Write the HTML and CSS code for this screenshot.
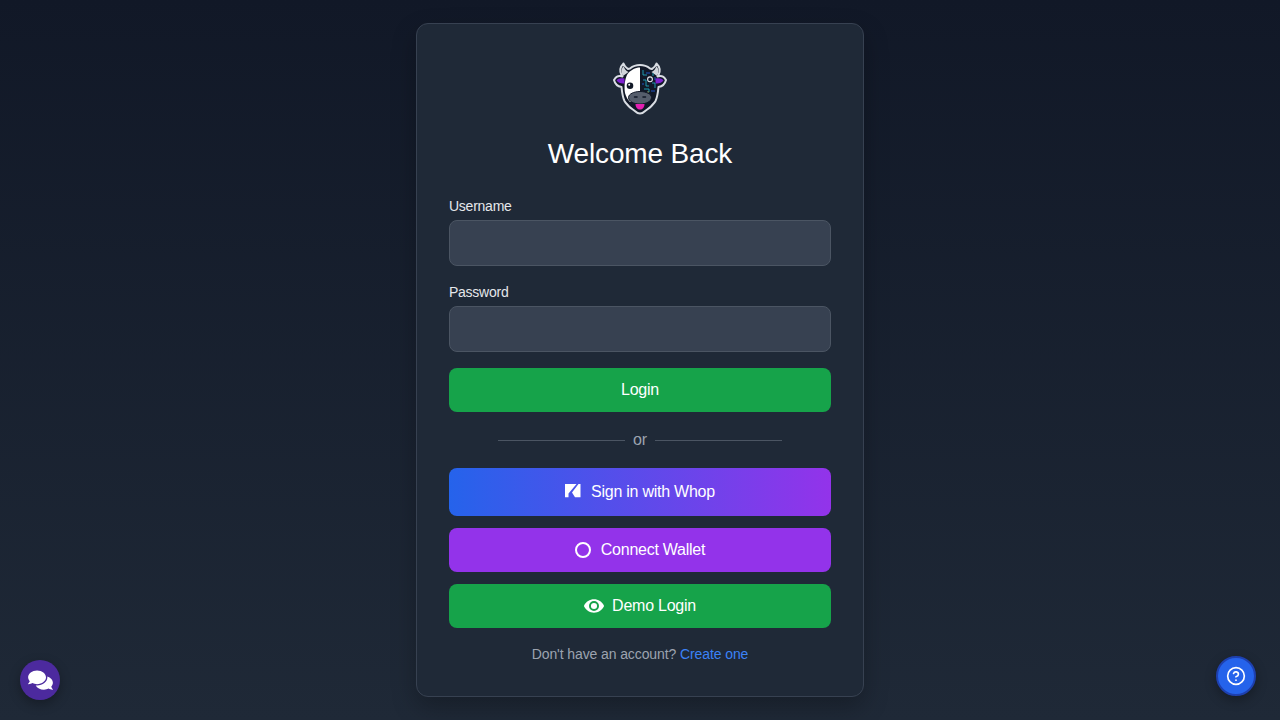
FILE: index.html
```html
<!DOCTYPE html>
<html>
<head>
	<title>Login</title>
	<meta charset="utf-8">
	<link rel="stylesheet" href="styles.css">
</head>
<body>
	<main class="card">
		<svg class="logo" viewBox="0 0 64 64">
			<path d="M32 9C28 9 25 10 22 12.500L20 13C18 11.500 16.500 10.500 15.500 7.500C12.500 10.500 11.500 15 13.500 19L14.500 20.500C11.500 19.500 8 20.500 6 24C7 28 10 30.500 13.500 31C14 36 14.500 41 16.500 45C18 47.500 19.500 48.500 20.500 50C23 52.500 26 54 27.500 55.500C30 58 34 58 36.500 55.500C38 54 41 52.500 43.500 50C44.500 48.500 46 47.500 47.500 45C49.500 41 50 36 50.500 31C54 30.500 57 28 58 24C56 20.500 52.500 19.500 49.500 20.500L50.500 19C52.500 15 51.500 10.500 48.500 7.500C47.500 10.500 46 11.500 44 13L42 12.500C39 10 36 9 32 9Z" fill="#111827" stroke="#d9dde3" stroke-width="2" stroke-linejoin="round"/>
			<path d="M15.500 10C13 13 13 17 15 20L20.500 16C18 15 16.500 13 15.500 10ZM48.500 10C51 13 51 17 49 20L43.500 16C46 15 47.500 13 48.500 10Z" fill="#d1d5db"/>
			<path d="M8.500 24.200C10 22.200 13 21.700 16.500 22.500L16.500 27.500C12.500 27.800 10 26.500 8.500 24.200ZM55.500 24.200C54 22.200 51 21.700 47.500 22.500L47.500 27.500C51.500 27.800 54 26.500 55.500 24.200Z" fill="#7e22ce"/>
			<path d="M32 11.500C27 11.500 23 14 19.500 18C16.500 23 16 32 17 37C18 41 20 44 22 46L32 44Z" fill="#fff"/>
			<circle cx="22" cy="29.700" r="3.300" fill="#111827"/>
			<circle cx="21.200" cy="28.800" r="1" fill="#fff"/>
			<g fill="none" stroke-width=".8">
				<path d="M35 14v5h4M35 24h3v6h3M44 27h3v5M36 33h5v3M45 20v-3" stroke="#22b8cf"/>
				<path d="M38 17h4M34 28h2M43 35h4M47 24v-3" stroke="#2563eb"/>
				<path d="M39 36h2" stroke="#a3b86c"/>
				<circle cx="42" cy="23.300" r="2.400" stroke="#e5e7eb" stroke-width="1.100"/>
			</g>
			<path d="M20.500 41.500C20.500 38 26 35.500 32 35.500S43.500 38 43.500 41.500C43.500 45.500 38 48 32 48S20.500 45.500 20.500 41.500Z" fill="#565e6c" stroke="#111827"/>
			<path d="M26.500 41h2.500M35 41h2.500" stroke="#111827" stroke-width="1.500" stroke-linecap="round"/>
			<path d="M27.500 48H36.500C36.500 51.500 34.500 53.500 32 53.500S27.500 51.500 27.500 48Z" fill="#e21fb0"/>
		</svg>
		<h1 class="title">Welcome Back</h1>
		<form class="form">
			<label class="field">
				<span class="field-label">Username</span>
				<input class="input" type="text">
			</label>
			<label class="field">
				<span class="field-label">Password</span>
				<input class="input" type="password">
			</label>
			<button class="btn btn-green" type="button">Login</button>
		</form>
		<div class="divider"><span class="divider-text">or</span></div>
		<div class="socials">
			<button class="btn btn-whop" type="button">
				<svg class="whop-icon" viewBox="0 0 16 14"><path d="M0 0H11.500L3.500 9.500V13.300H0ZM13.500 0H15.500V13.300H10L7 8.500Z" fill="#fff"/></svg>
				Sign in with Whop
			</button>
			<button class="btn btn-purple" type="button">
				<span class="ring"></span>
				Connect Wallet
			</button>
			<button class="btn btn-green btn-demo" type="button">
				<svg class="eye-icon" viewBox="0 0 576 512"><path fill="#fff" d="M572.52 241.4C518.29 135.59 410.93 64 288 64S57.68 135.64 3.48 241.41a32.35 32.35 0 0 0 0 29.19C57.71 376.41 165.07 448 288 448s230.32-71.64 284.52-177.41a32.35 32.35 0 0 0 0-29.19zM288 400a144 144 0 1 1 144-144 143.93 143.93 0 0 1-144 144z"/><circle cx="288" cy="256" r="88" fill="#fff"/></svg>
				Demo Login
			</button>
		</div>
		<p class="signup">Don't have an account? <a class="signup-link" href="#">Create one</a></p>
	</main>

	<button class="float float-chat" type="button">
		<svg class="chat-icon" viewBox="0 0 576 512"><path fill="#fff" d="M416 192c0-88.4-93.1-160-208-160S0 103.6 0 192c0 34.3 14.1 65.9 38 92-13.4 30.2-35.500 54.200-35.800 54.500-2.200 2.300-2.800 5.700-1.500 8.700S4.800 352 8 352c36.600 0 66.900-12.300 88.700-25 32.200 15.700 70.300 25 111.300 25 114.900 0 208-71.600 208-160zm122 220c23.900-26 38-57.700 38-92 0-66.900-53.500-124.200-129.300-148.100.9 6.600 1.300 13.300 1.300 20.100 0 105.900-107.700 192-240 192-10.800 0-21.300-.8-31.700-1.900C207.800 439.600 281.800 480 368 480c41 0 79.100-9.200 111.300-25 21.800 12.700 52.100 25 88.700 25 3.200 0 6.100-1.900 7.300-4.800 1.300-2.900.7-6.300-1.500-8.700-.3-.3-22.400-24.200-35.800-54.500z"/></svg>
	</button>
	<button class="float float-help" type="button">
		<svg class="help-icon" viewBox="0 0 24 24" fill="none" stroke="#fff" stroke-width="2" stroke-linecap="round" stroke-linejoin="round"><circle cx="12" cy="12" r="10"/><path d="M9.090 9a3 3 0 0 1 5.830 1c0 2-3 3-3 3"/><path d="M12 17h.01"/></svg>
	</button>
</body>
</html>
```

FILE: styles.css
```css
* {
	box-sizing: border-box;
}

html, body {
	height: 100%;
}

body {
	margin: 0;
	display: flex;
	align-items: center;
	justify-content: center;
	background: linear-gradient(to bottom, #111827, #1f2937);
	font-family: "Liberation Sans", sans-serif;
	color: #fff;
}

.card {
	width: 448px;
	padding: 32px;
	background-color: #1f2937;
	border: 1px solid #374151;
	border-radius: 12px;
	box-shadow: 0 10px 25px rgba(0, 0, 0, 0.25);
}

.logo {
	display: block;
	width: 64px;
	height: 64px;
	margin: 0 auto 16px;
}

.title {
	margin: 0 0 24px;
	font-size: 28px;
	line-height: 36px;
	font-weight: 400;
	letter-spacing: -0.15px;
	text-align: center;
}

.form {
	display: flex;
	flex-direction: column;
	gap: 16px;
}

.field {
	display: block;
}

.field-label {
	display: block;
	margin-bottom: 4px;
	font-size: 14px;
	line-height: 20px;
	letter-spacing: -0.25px;
	color: #e5e7eb;
}

.input {
	display: block;
	width: 100%;
	height: 46px;
	background-color: #374151;
	border: 1px solid #4b5563;
	border-radius: 8px;
}

.btn {
	display: flex;
	align-items: center;
	justify-content: center;
	gap: 10px;
	width: 100%;
	height: 44px;
	border: none;
	border-radius: 8px;
	font-family: inherit;
	font-size: 16px;
	letter-spacing: -0.25px;
	color: #fff;
}

.btn-green {
	background-color: #16a34a;
}

.btn-purple {
	background-color: #9333ea;
}

.btn-demo {
	gap: 8px;
}

.btn-whop {
	height: 48px;
	background: linear-gradient(to right, #2563eb, #9333ea);
}

.divider {
	display: flex;
	align-items: center;
	gap: 8px;
	margin: 16px 0;
	padding: 0 49px;
}

.divider::before,
.divider::after {
	content: "";
	flex: 1;
	height: 1px;
	background-color: #4b5563;
}

.divider-text {
	font-size: 16px;
	line-height: 24px;
	color: #9ca3af;
}

.socials {
	display: flex;
	flex-direction: column;
	gap: 12px;
}

.whop-icon {
	width: 16px;
	height: 14px;
	margin-bottom: 2px;
}

.ring {
	width: 16px;
	height: 16px;
	border: 2px solid #fff;
	border-radius: 50%;
}

.eye-icon {
	width: 20px;
	height: 18px;
}

.signup {
	margin: 16px 0 0;
	font-size: 14px;
	line-height: 20px;
	letter-spacing: -0.1px;
	text-align: center;
	color: #9ca3af;
}

.signup-link {
	color: #3b82f6;
	text-decoration: none;
}

.float {
	position: fixed;
	display: flex;
	align-items: center;
	justify-content: center;
	width: 40px;
	height: 40px;
	padding: 0;
	border-radius: 50%;
	box-shadow: 0 4px 12px rgba(0, 0, 0, 0.3);
}

.float-chat {
	left: 20px;
	bottom: 20px;
	border: none;
	background-color: #4c2a9e;
}

.float-help {
	right: 24px;
	bottom: 24px;
	border: 2px solid #1e40af;
	background-color: #2563eb;
}

.chat-icon {
	width: 25px;
	height: 22px;
}

.help-icon {
	width: 20px;
	height: 20px;
}
```
